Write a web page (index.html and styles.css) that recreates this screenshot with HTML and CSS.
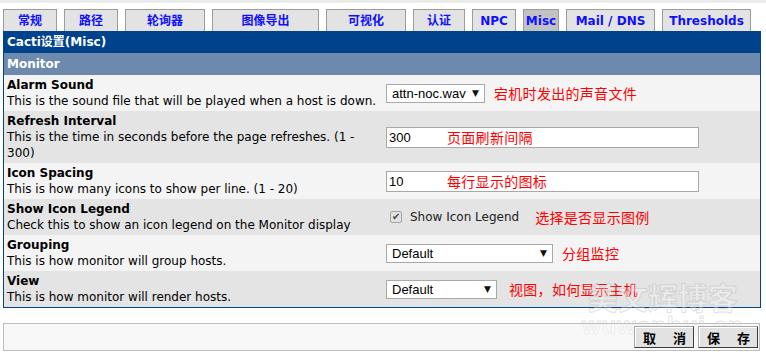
FILE: index.html
```html
<!DOCTYPE html>
<html>
<head>
  <meta charset="UTF-8">
  <title>Cacti设置(Misc)</title>
  <link rel="stylesheet" href="styles.css">
</head>
<body>
  <div class="page">
    <div class="topbar"></div>
    <ul class="tabs">
      <li class="tab"><a href="#">常规</a></li>
      <li class="tab"><a href="#">路径</a></li>
      <li class="tab"><a href="#">轮询器</a></li>
      <li class="tab"><a href="#">图像导出</a></li>
      <li class="tab"><a href="#">可视化</a></li>
      <li class="tab"><a href="#">认证</a></li>
      <li class="tab"><a href="#">NPC</a></li>
      <li class="tab active"><a href="#">Misc</a></li>
      <li class="tab"><a href="#">Mail / DNS</a></li>
      <li class="tab"><a href="#">Thresholds</a></li>
    </ul>

    <div class="settings">
      <div class="settings-title">Cacti设置(Misc)</div>
      <div class="settings-section">Monitor</div>

      <div class="row light">
        <div class="row-label"><b>Alarm Sound</b><br>This is the sound file that will be played when a host is down.</div>
        <div class="row-field">
          <span class="select sound"><select><option>attn-noc.wav</option></select></span>
          <span class="note">宕机时发出的声音文件</span>
        </div>
      </div>

      <div class="row dark">
        <div class="row-label"><b>Refresh Interval</b><br>This is the time in seconds before the page refreshes. (1 - 300)</div>
        <div class="row-field">
          <span class="textbox">
            <input type="text" value="300">
            <span class="note over">页面刷新间隔</span>
          </span>
        </div>
      </div>

      <div class="row light">
        <div class="row-label"><b>Icon Spacing</b><br>This is how many icons to show per line. (1 - 20)</div>
        <div class="row-field">
          <span class="textbox">
            <input type="text" value="10">
            <span class="note over">每行显示的图标</span>
          </span>
        </div>
      </div>

      <div class="row dark">
        <div class="row-label"><b>Show Icon Legend</b><br>Check this to show an icon legend on the Monitor display</div>
        <div class="row-field">
          <label class="check"><input type="checkbox" checked> Show Icon Legend</label>
          <span class="note legend-note">选择是否显示图例</span>
        </div>
      </div>

      <div class="row light">
        <div class="row-label"><b>Grouping</b><br>This is how monitor will group hosts.</div>
        <div class="row-field">
          <span class="select grouping"><select><option>Default</option></select></span>
          <span class="note">分组监控</span>
        </div>
      </div>

      <div class="row dark">
        <div class="row-label"><b>View</b><br>This is how monitor will render hosts.</div>
        <div class="row-field">
          <span class="select view"><select><option>Default</option></select></span>
          <span class="note view-note">视图，如何显示主机</span>
        </div>
      </div>
    </div>

    <div class="watermark">
      <div class="wm-cn">美文辉博客</div>
      <div class="wm-en">wuwenhui.cn</div>
    </div>

    <div class="actions">
      <button class="btn"><span>取</span><span>消</span></button>
      <button class="btn"><span>保</span><span>存</span></button>
    </div>
  </div>
</body>
</html>
```

FILE: styles.css
```css
body {
  margin: 0;
  background: #fff;
  font-family: "DejaVu Sans", "Noto Sans CJK SC", sans-serif;
  font-size: 12px;
  color: #000;
}

.page {
  position: relative;
  width: 766px;
  height: 358px;
  overflow: hidden;
}

.topbar {
  height: 3px;
  background-color: #ececec;
}

/* tabs */
.tabs {
  display: flex;
  gap: 7px;
  list-style: none;
  margin: 6px 0 0 3px;
  padding: 0;
}

.tab {
  height: 22px;
  box-sizing: border-box;
  border: 1px solid #9c9c9c;
  border-bottom: none;
  background-color: #e3e3e3;
  text-align: center;
}

.tab a {
  display: block;
  line-height: 22px;
  font-weight: bold;
  color: #1010ff;
  text-decoration: none;
  white-space: nowrap;
}

.tab.active {
  background-color: #c2c2c2;
}

.tab:nth-child(1) { width: 54px; }
.tab:nth-child(2) { width: 54px; }
.tab:nth-child(3) { width: 80px; }
.tab:nth-child(4) { width: 107px; }
.tab:nth-child(5) { width: 80px; }
.tab:nth-child(6) { width: 52px; }
.tab:nth-child(7) { width: 44px; }
.tab:nth-child(8) { width: 36px; }
.tab:nth-child(9) { width: 89px; }
.tab:nth-child(10) { width: 89px; }

/* settings table */
.settings {
  width: 758px;
  box-sizing: border-box;
  margin-left: 3px;
  border: 1px solid #00438c;
}

.settings-title {
  height: 21px;
  line-height: 21px;
  padding-left: 3px;
  background-color: #00438c;
  color: #fff;
  font-weight: bold;
}

.settings-section {
  height: 22px;
  line-height: 22px;
  padding-left: 3px;
  background-color: #6d89ad;
  color: #fff;
  font-weight: bold;
}

.row {
  display: grid;
  grid-template-columns: 378px 1fr;
  align-items: center;
}

.row.light {
  background-color: #f4f4f4;
}

.row.dark {
  background-color: #e4e4e4;
}

.row-label {
  padding: 2px 2px 2px 3px;
  line-height: 16px;
}

.row-field {
  display: flex;
  align-items: center;
  padding-left: 4px;
}

/* form controls */
input[type="text"],
select {
  font-family: "Liberation Sans", Arial, sans-serif;
  font-size: 13px;
  color: #000;
  background: #fff;
  border: 1px solid #a9a9a9;
  border-radius: 0;
  box-sizing: border-box;
  margin: 0;
  outline: none;
}

.textbox {
  position: relative;
  display: block;
}

.textbox input {
  width: 313px;
  height: 21px;
  padding: 0 2px;
}

.select {
  position: relative;
  display: block;
}

.select select {
  appearance: none;
  -webkit-appearance: none;
  height: 19px;
  padding: 0 0 0 5px;
  width: 100%;
}

.select::after {
  content: "▼";
  position: absolute;
  right: 6px;
  top: 4px;
  font-size: 9px;
  color: #111;
  pointer-events: none;
}

.select.sound { width: 99px; }
.select.grouping { width: 167px; }
.select.view { width: 111px; }

.check {
  display: flex;
  align-items: center;
  gap: 8px;
  margin-left: 4px;
  color: #222;
}

.check input {
  appearance: none;
  -webkit-appearance: none;
  position: relative;
  width: 12px;
  height: 12px;
  margin: 0;
  border: 1px solid #a4a4a4;
  border-radius: 2px;
  background-color: #e2e2e2;
}

.check input:checked::after {
  content: "✔";
  position: absolute;
  left: 1px;
  top: -2px;
  font-size: 10px;
  line-height: 14px;
  color: #4a4a4a;
}

/* red annotations */
.note {
  margin-left: 9px;
  font-family: "Noto Sans CJK SC", sans-serif;
  font-size: 14px;
  letter-spacing: 0.3px;
  color: #f00;
  white-space: nowrap;
}

.note.over {
  position: absolute;
  left: 61px;
  top: 0;
  margin: 0;
  line-height: 20px;
}

.legend-note { margin-left: 16px; }
.view-note { margin-left: 12px; }

/* bottom buttons */
.actions {
  position: relative;
  display: flex;
  justify-content: flex-end;
  gap: 4px;
  width: 757px;
  box-sizing: border-box;
  margin: 15px 0 0 3px;
  padding: 2px 1px;
  border: 1px solid #bdbdbd;
  background-color: rgba(244, 244, 244, 0.6);
}

.btn {
  display: flex;
  justify-content: space-between;
  align-items: center;
  width: 60px;
  height: 22px;
  padding: 0 7px 0 8px;
  box-sizing: border-box;
  background-color: #e2e2e2;
  border: 1px solid;
  border-color: #a8a8a8 #3c3c3c #3c3c3c #a8a8a8;
  box-shadow: inset 1px 1px #fff;
  font-family: "Noto Sans CJK SC", sans-serif;
  font-size: 13px;
  font-weight: bold;
  color: #000;
  cursor: pointer;
}

/* watermark, sits behind the buttons */
.watermark {
  position: absolute;
  left: 582px;
  top: 276px;
  pointer-events: none;
  text-align: center;
}

.wm-cn {
  font-family: "Noto Sans CJK SC", sans-serif;
  font-size: 30px;
  font-weight: bold;
  line-height: 40px;
  color: rgba(255, 255, 255, 0.3);
  -webkit-text-stroke: 1px rgba(185, 185, 185, 0.45);
}

.wm-en {
  margin-top: -4px;
  font-family: "Liberation Sans", Arial, sans-serif;
  font-size: 24px;
  font-weight: bold;
  letter-spacing: 1px;
  color: rgba(255, 255, 255, 0.3);
  -webkit-text-stroke: 1px rgba(185, 185, 185, 0.4);
}
```
